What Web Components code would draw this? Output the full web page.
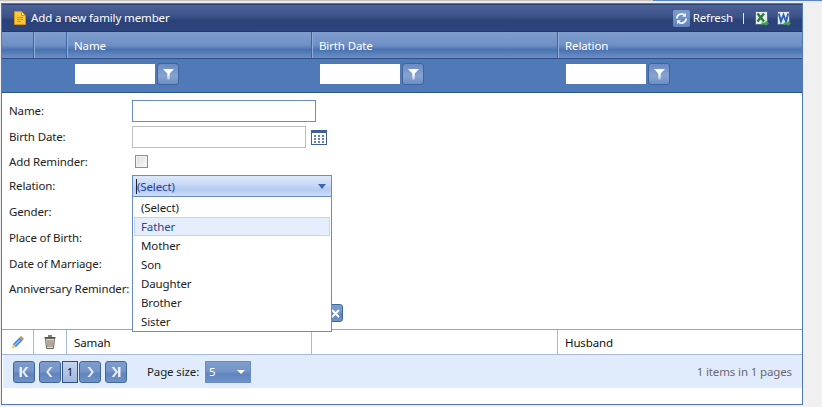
<!DOCTYPE html>
<html>
<head>
<meta charset="utf-8">
<title>Family members</title>
<style>
  html, body { margin: 0; padding: 0; height: 407px; overflow: hidden; background: #f0f0f0; }
  body {
    font: 11.5px "Noto Sans", "Open Sans", sans-serif;
    letter-spacing: -0.13px;
    padding-top: 3px;
    box-sizing: border-box;
    /* strip left over from the window above the grid */
    background:
      linear-gradient(90deg, #c9c2bb 653px, #5b84c6 653px) 0 0 / 100% 1px no-repeat,
      linear-gradient(#e9ebf1, #e9ebf1) 0 1px / 100% 2px no-repeat,
      #f0f0f0;
  }
</style>
</head>
<body>
<family-grid>
  <command-bar slot="command" title-text="Add a new family member"></command-bar>
  <grid-header slot="header"></grid-header>
  <filter-row slot="filter"></filter-row>
  <member-form slot="form"></member-form>
  <data-row slot="rows" name="Samah" relation="Husband"></data-row>
  <grid-pager slot="pager"></grid-pager>
</family-grid>

<script>
// Column widths are shared by header, filter row and data rows
const COLUMNS = '--cols: 32px 33px 245px 246px 1fr;';

const ICONS = {
  note: `<svg width="12" height="14" viewBox="0 0 12 14"><path d="M.5.5h7l4 4v9h-11z" fill="#fdc83a" stroke="#d9930f"/><path d="M7.500.5v4h4z" fill="#ffeaa6" stroke="#d9930f"/><path d="M3 6.500h6M3 8.500h6M3 10.500h4" stroke="#d9930f"/></svg>`,
  refresh: `<svg width="17" height="17" viewBox="0 0 17 17"><defs><linearGradient id="r" x1="0" y1="0" x2="0" y2="1"><stop offset="0" stop-color="#7c9bcc"/><stop offset="1" stop-color="#5f84bd"/></linearGradient></defs><rect width="17" height="17" rx="2" fill="url(#r)"/><path d="M3.800 8.500a4.700 4.700 0 0 1 7.600-3.500M13.200 8.500a4.700 4.700 0 0 1-7.600 3.500" fill="none" stroke="#eef3fb" stroke-width="1.800"/><path d="M13 2.800v3.900H9.100zM4 14.200v-3.900h3.900z" fill="#eef3fb"/></svg>`,
  excel: `<svg width="14" height="15" viewBox="0 0 14 15"><rect x=".5" y=".5" width="12" height="13" fill="#e6edf2" stroke="#4f6b7c"/><path d="M2.500 2.500l6.500 8M9 2.500l-6.500 8" stroke="#2a7d37" stroke-width="2.400"/><path d="M6.500 11.500h4V9.500l3.500 3-3.500 2.500v-1.500h-4z" fill="#39a843"/></svg>`,
  word: `<svg width="14" height="15" viewBox="0 0 14 15"><rect x=".5" y=".5" width="12" height="13" fill="#e6edf2" stroke="#4f6b7c"/><path d="M1.800 2.500l2.200 8 2.500-6.500 2.500 6.500 2.200-8" fill="none" stroke="#2c5fb3" stroke-width="1.900"/><path d="M6.500 11.500h4V9.500l3.500 3-3.500 2.500v-1.500h-4z" fill="#39a843"/></svg>`,
  funnel: `<svg width="11" height="12" viewBox="0 0 11 12"><defs><linearGradient id="f" x1="0" y1="0" x2="0" y2="1"><stop offset=".5" stop-color="#fff"/><stop offset="1" stop-color="#b4c6e4"/></linearGradient></defs><path d="M0 1h11L6.700 5.500V11.500H4.300V5.500z" fill="url(#f)"/></svg>`,
  calendar: `<svg width="16" height="15" viewBox="0 0 16 15"><rect x=".5" y=".5" width="15" height="14" fill="#fff" stroke="#3f5f95"/><rect x="1" y="1" width="14" height="2" fill="#3f5f95"/><path d="M3 5h2v2H3zM7 5h2v2H7zM11 5h2v2h-2zM3 8h2v2H3zM7 8h2v2H7zM11 8h2v2h-2zM3 11h2v2H3zM7 11h2v2H7zM11 11h2v2h-2z" fill="#5f82bd"/></svg>`,
  pencil: `<svg width="14" height="14" viewBox="0 0 14 14"><path d="M10 .8l3 3-1.500 1.700-3-3z" fill="#e58a3c"/><path d="M8.500 2.500l3 3-6.700 6.700-3-3z" fill="#3f86d8"/><path d="M8.500 4.500l1 1-6 6-1-1z" fill="#8cc0f0"/><path d="M1.800 9.200l3 3-4 1.200z" fill="#ecd060"/></svg>`,
  trash: `<svg width="12" height="14" viewBox="0 0 12 14"><path d="M4 1h4M.5 2.800h11" stroke="#5a5448" stroke-width="1.400"/><path d="M1.500 3.500l1 10h7l1-10z" fill="#e2dbc9" stroke="#6a6456"/><path d="M4 5v7M6 5v7M8 5v7" stroke="#7d7666"/></svg>`,
  first: `<svg width="12" height="12" viewBox="0 0 12 12"><path d="M1.500 1h2.500v10H1.500zM10.500 1L6.500 6l4 5H7.800L4 6l3.800-5z" fill="#e8effa"/></svg>`,
  prev: `<svg width="12" height="12" viewBox="0 0 12 12"><path d="M8.500 1L4.500 6l4 5H6L2.200 6 6 1z" fill="#e8effa"/></svg>`,
  next: `<svg width="12" height="12" viewBox="0 0 12 12"><path d="M3.500 1l4 5-4 5H6l3.800-5L6 1z" fill="#e8effa"/></svg>`,
  last: `<svg width="12" height="12" viewBox="0 0 12 12"><path d="M8 1h2.500v10H8zM1.500 1l4 5-4 5h2.700L8 6 4.200 1z" fill="#e8effa"/></svg>`,
  close: `<svg width="9" height="9" viewBox="0 0 9 9"><path d="M1 1l7 7M8 1L1 8" stroke="#fff" stroke-width="2"/></svg>`
};

const BLUE_BUTTON = 'linear-gradient(#7e9ccc 0%, #7595c8 45%, #5f84bd 60%, #7092c8 100%)';

class FamilyGrid extends HTMLElement {
  constructor() {
    super();
    this.attachShadow({ mode: 'open' });
    this.shadowRoot.innerHTML = `
      <style>
        :host {
          display: flex;
          flex-direction: column;
          box-sizing: border-box;
          width: 802px;
          height: 402px;
          margin-left: 1px;
          background: #fff;
          border: 1px solid #4f78b8;
          ${COLUMNS}
        }
        .spacer { flex: 1; }
      </style>
      <slot name="command"></slot>
      <slot name="header"></slot>
      <slot name="filter"></slot>
      <slot name="form"></slot>
      <slot name="rows"></slot>
      <slot name="pager"></slot>
      <div class="spacer"></div>
    `;
  }
}

class CommandBar extends HTMLElement {
  constructor() {
    super();
    this.attachShadow({ mode: 'open' });
  }

  connectedCallback() {
    this.shadowRoot.innerHTML = `
      <style>
        :host {
          display: flex;
          align-items: center;
          box-sizing: border-box;
          height: 28px;
          padding: 0 11px 0 12px;
          color: #fff;
          background: linear-gradient(#4d6296 0%, #3b5188 45%, #2a4278 60%, #2c447c 100%);
          border-top: 1px solid #2d4375;
          border-bottom: 1px solid #22386a;
        }
        .title { margin: -2px 0 0 5px; flex: 1; }
        .label { margin-top: -2px; }
        .refresh { margin-right: 3px; display: flex; }
        .sep { margin: 0 11px 0 10px; width: 1px; height: 11px; background: #dfe6f4; }
        .icon { display: flex; }
        .icon + .icon { margin-left: 8px; }
      </style>
      <span class="icon">${ICONS.note}</span>
      <span class="title">${this.getAttribute('title-text')}</span>
      <span class="refresh">${ICONS.refresh}</span>
      <span class="label">Refresh</span>
      <span class="sep"></span>
      <span class="icon">${ICONS.excel}</span>
      <span class="icon">${ICONS.word}</span>
    `;
  }
}

class GridHeader extends HTMLElement {
  constructor() {
    super();
    this.attachShadow({ mode: 'open' });
    this.shadowRoot.innerHTML = `
      <style>
        :host {
          display: grid;
          grid-template-columns: var(--cols);
          box-sizing: border-box;
          height: 27px;
          color: #fff;
          background: linear-gradient(#7f9dcd 0%, #6f90c6 50%, #4a72b1 68%, #6d8fc5 100%);
          border-bottom: 1px solid #2f4f88;
        }
        div {
          display: flex;
          align-items: center;
          padding: 1px 0 0 7px;
          border-right: 1px solid #3f659f;
          box-shadow: 1px 0 0 #8fabd6;
        }
        div:last-child { border-right: 0; box-shadow: none; }
      </style>
      <div></div><div></div>
      <div>Name</div><div>Birth Date</div><div>Relation</div>
    `;
  }
}

class FilterCell extends HTMLElement {
  constructor() {
    super();
    this.attachShadow({ mode: 'open' });
    this.shadowRoot.innerHTML = `
      <style>
        :host { display: flex; align-items: center; padding-left: 8px; }
        .box { width: 80px; height: 20px; background: #fff; }
        button {
          display: flex;
          align-items: center;
          justify-content: center;
          box-sizing: border-box;
          width: 22px;
          height: 22px;
          margin-left: 2px;
          padding: 0;
          border: 1px solid #3f659f;
          border-radius: 3px;
          background: linear-gradient(#6a8bc2, #86a2d0 60%, #6c8dc4);
        }
      </style>
      <div class="box"></div>
      <button>${ICONS.funnel}</button>
    `;
  }
}

class FilterRow extends HTMLElement {
  constructor() {
    super();
    this.attachShadow({ mode: 'open' });
    this.shadowRoot.innerHTML = `
      <style>
        :host {
          display: grid;
          grid-template-columns: var(--cols);
          box-sizing: border-box;
          height: 34px;
          padding-bottom: 3px;
          background: #5079b7;
          border-bottom: 1px solid #2f5590;
        }
      </style>
      <div></div><div></div>
      <filter-cell></filter-cell><filter-cell></filter-cell><filter-cell></filter-cell>
    `;
  }
}

class FormRow extends HTMLElement {
  constructor() {
    super();
    this.attachShadow({ mode: 'open' });
    this.shadowRoot.innerHTML = `
      <style>
        :host {
          display: grid;
          grid-template-columns: 123px 1fr;
          align-items: center;
          min-height: 22px;
          color: #222;
        }
        .label { white-space: nowrap; margin-top: -1px; }
        .field { display: flex; align-items: center; }
      </style>
      <div class="label"><slot name="label"></slot></div>
      <div class="field"><slot></slot></div>
    `;
  }
}

class ComboBox extends HTMLElement {
  constructor() {
    super();
    this.attachShadow({ mode: 'open' });
    const items = ['(Select)', 'Father', 'Mother', 'Son', 'Daughter', 'Brother', 'Sister'];
    this.shadowRoot.innerHTML = `
      <style>
        :host {
          display: block;
          position: relative;
          box-sizing: border-box;
          width: 200px;
          height: 22px;
        }
        .field {
          display: flex;
          align-items: center;
          box-sizing: border-box;
          height: 22px;
          padding-left: 3px;
          color: #24409a;
          border: 1px solid #6a8cc6;
          background: linear-gradient(#dfe9fa 0%, #c6d8f5 45%, #b4cbf0 70%, #cfdef7 100%);
        }
        .caret { width: 1px; height: 15px; background: #222; }
        .text { flex: 1; }
        .arrow {
          margin-right: 5px;
          border-left: 4px solid transparent;
          border-right: 4px solid transparent;
          border-top: 5px solid #3a69b0;
        }
        .popup {
          position: absolute;
          z-index: 5;
          left: 0;
          top: 22px;
          box-sizing: border-box;
          width: 200px;
          height: 135px;
          padding: 1px;
          background: #fff;
          border: 1px solid #6a8cc6;
          border-top: 0;
        }
        .item {
          display: flex;
          align-items: center;
          box-sizing: border-box;
          height: 19px;
          padding-left: 7px;
          color: #222;
        }
        .item.hot {
          color: #2b4a8e;
          background: #e4eefc;
          border: 1px solid #c3d6f0;
          padding-left: 6px;
        }
      </style>
      <div class="field">
        <span class="caret"></span><span class="text">(Select)</span><span class="arrow"></span>
      </div>
      <div class="popup">
        ${items.map(item => `<div class="item ${item === 'Father' ? 'hot' : ''}">${item}</div>`).join('')}
      </div>
    `;
  }
}

class MemberForm extends HTMLElement {
  constructor() {
    super();
    this.attachShadow({ mode: 'open' });
    this.shadowRoot.innerHTML = `
      <style>
        :host {
          display: flex;
          flex-direction: column;
          gap: 4px;
          box-sizing: border-box;
          height: 236px;
          padding: 7px 0 0 7px;
        }
        .name, .date, .plain { box-sizing: border-box; height: 22px; background: #fff; }
        .name { width: 184px; border: 1px solid #6a8cc6; }
        .date { width: 174px; border: 1px solid #bdbdbd; }
        .plain { width: 184px; border: 1px solid #bdbdbd; }
        .cal { margin-left: 5px; display: flex; }
        .check {
          box-sizing: border-box;
          width: 13px;
          height: 13px;
          margin-left: 3px;
          border: 1px solid #8e8e8e;
          background: linear-gradient(135deg, #dcdcdc, #fbfbfb);
          box-shadow: inset 0 0 0 1px #f2f2f2;
        }
        .buttons { display: flex; justify-content: flex-end; width: 334px; margin-top: 1px; }
        .cancel {
          display: flex;
          align-items: center;
          justify-content: center;
          width: 16px;
          height: 18px;
          box-sizing: border-box;
          border: 1px solid #3f659f;
          border-radius: 3px;
          background: ${BLUE_BUTTON};
        }
      </style>
      <form-row><span slot="label">Name:</span><div class="name"></div></form-row>
      <form-row><span slot="label">Birth Date:</span><div class="date"></div><span class="cal">${ICONS.calendar}</span></form-row>
      <form-row style="min-height:19px"><span slot="label">Add Reminder:</span><div class="check"></div></form-row>
      <form-row><span slot="label">Relation:</span><combo-box></combo-box></form-row>
      <form-row><span slot="label">Gender:</span><div class="plain"></div></form-row>
      <form-row><span slot="label">Place of Birth:</span><div class="plain"></div></form-row>
      <form-row><span slot="label">Date of Marriage:</span><div class="plain"></div></form-row>
      <form-row style="min-height:20px"><span slot="label">Anniversary Reminder:</span></form-row>
      <div class="buttons"><span class="cancel">${ICONS.close}</span></div>
    `;
  }
}

class DataRow extends HTMLElement {
  constructor() {
    super();
    this.attachShadow({ mode: 'open' });
  }

  connectedCallback() {
    this.shadowRoot.innerHTML = `
      <style>
        :host {
          display: grid;
          grid-template-columns: var(--cols);
          box-sizing: border-box;
          height: 26px;
          color: #111;
          border-top: 1px solid #8ea4cc;
          border-bottom: 1px solid #a9bad8;
        }
        div {
          display: flex;
          align-items: center;
          padding-left: 7px;
          border-right: 1px solid #a9bad8;
        }
        div:last-child { border-right: 0; }
        .tool { justify-content: center; padding: 0; }
      </style>
      <div class="tool">${ICONS.pencil}</div>
      <div class="tool">${ICONS.trash}</div>
      <div>${this.getAttribute('name')}</div>
      <div></div>
      <div>${this.getAttribute('relation')}</div>
    `;
  }
}

class GridPager extends HTMLElement {
  constructor() {
    super();
    this.attachShadow({ mode: 'open' });
    this.shadowRoot.innerHTML = `
      <style>
        :host {
          display: flex;
          align-items: center;
          box-sizing: border-box;
          height: 33px;
          margin-left: 1px;
          padding: 0 10px 0 10px;
          background: #e0ecfb;
        }
        .btn {
          display: flex;
          align-items: center;
          justify-content: center;
          box-sizing: border-box;
          width: 22px;
          height: 22px;
          border: 1px solid #3f659f;
          border-radius: 3px;
          background: ${BLUE_BUTTON};
        }
        .gap { margin-left: 4px; }
        .num {
          display: flex;
          align-items: center;
          justify-content: center;
          box-sizing: border-box;
          width: 16px;
          height: 22px;
          margin: 0 1px;
          color: #111;
          border: 1px solid #2f4f88;
          background: linear-gradient(#c4d4ec, #9db6dc);
        }
        .size { margin-left: 20px; width: 52px; white-space: nowrap; color: #222; }
        .select {
          display: flex;
          align-items: center;
          box-sizing: border-box;
          width: 46px;
          height: 22px;
          margin-left: 6px;
          padding: 0 5px 0 3px;
          color: #fff;
          background: ${BLUE_BUTTON};
          border: 1px solid #6a8cc6;
        }
        .select span:first-child { flex: 1; }
        .arrow {
          border-left: 4px solid transparent;
          border-right: 4px solid transparent;
          border-top: 4px solid #fff;
        }
        .info { margin-left: auto; color: #6c6672; }
      </style>
      <span class="btn">${ICONS.first}</span>
      <span class="btn gap">${ICONS.prev}</span>
      <span class="num">1</span>
      <span class="btn">${ICONS.next}</span>
      <span class="btn gap">${ICONS.last}</span>
      <span class="size">Page size:</span>
      <span class="select"><span>5</span><span class="arrow"></span></span>
      <span class="info">1 items in 1 pages</span>
    `;
  }
}

customElements.define('family-grid', FamilyGrid);
customElements.define('command-bar', CommandBar);
customElements.define('grid-header', GridHeader);
customElements.define('filter-cell', FilterCell);
customElements.define('filter-row', FilterRow);
customElements.define('form-row', FormRow);
customElements.define('combo-box', ComboBox);
customElements.define('member-form', MemberForm);
customElements.define('data-row', DataRow);
customElements.define('grid-pager', GridPager);
</script>
</body>
</html>
